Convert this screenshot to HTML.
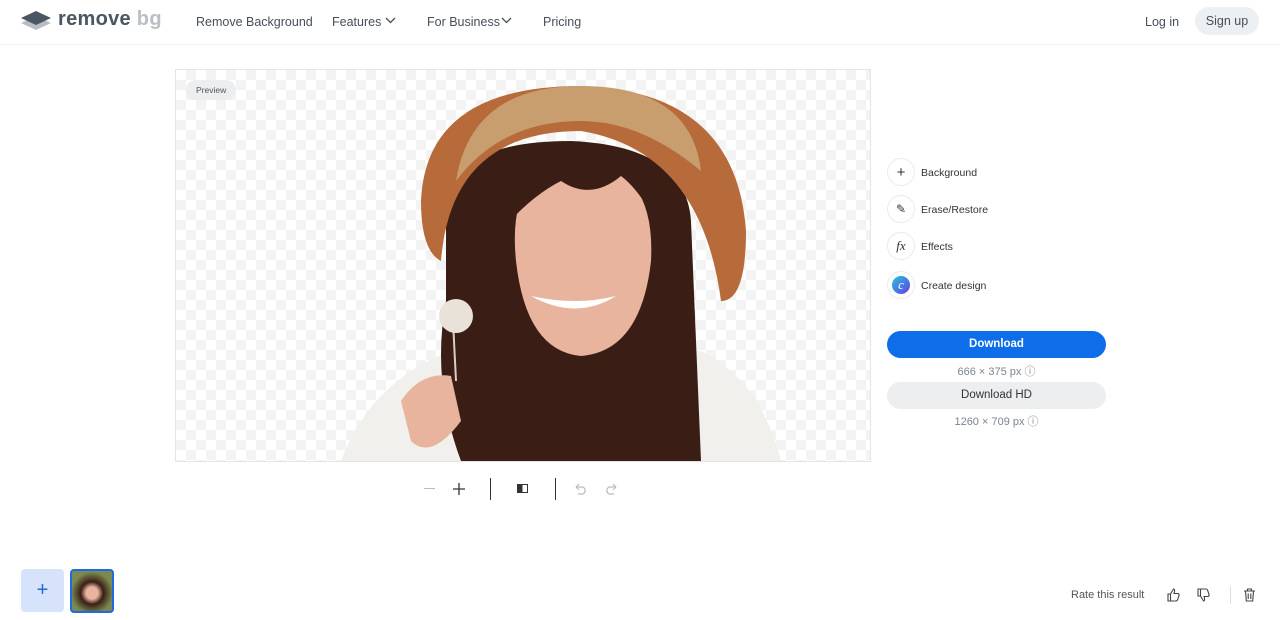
<!DOCTYPE html><html><head><style>
body{margin:0;width:1280px;height:620px;background:#fff;font-family:"Liberation Sans",sans-serif;position:relative;overflow:hidden;color:#454f5b}
.a{position:absolute}
.nav{font-size:12.5px;color:#454f5b}
.chk{background-color:#fff;background-image:linear-gradient(45deg,#f3f3f3 25%,transparent 25%,transparent 75%,#f3f3f3 75%),linear-gradient(45deg,#f3f3f3 25%,transparent 25%,transparent 75%,#f3f3f3 75%);background-size:20px 20px;background-position:0 0,10px 10px}
.tool{left:887px;width:28px;height:28px;border-radius:50%;border:1.5px solid #e8ebee;box-sizing:border-box;display:flex;align-items:center;justify-content:center;font-size:15px;color:#333}
.tl{left:921px;font-size:10.5px;color:#333}
</style></head><body>
<div class="a" style="left:0;top:44px;width:1280px;height:1px;background:#f0f0f0"></div>
<svg class="a" style="left:20px;top:10px" width="32" height="22" viewBox="0 0 32 22"><path d="M1 13 L16 20 L31 13 L16 6Z" fill="#b8bec5"/><path d="M1 8 L16 15 L31 8 L16 1Z" fill="#4a5662"/></svg>
<div class="a" style="left:58px;top:8px;font-size:20px;font-weight:bold;color:#4a5662;letter-spacing:0.3px">remove<span style="color:#b9bfc6"> bg</span></div>
<div class="a nav" style="left:196px;top:15px">Remove Background</div>
<div class="a nav" style="left:332px;top:15px">Features</div>
<svg class="a" style="left:385px;top:17px" width="11" height="7"><path d="M1 1 L5.5 5.5 L10 1" stroke="#454f5b" stroke-width="1.3" fill="none"/></svg>
<div class="a nav" style="left:427px;top:15px">For Business</div>
<svg class="a" style="left:501px;top:17px" width="11" height="7"><path d="M1 1 L5.5 5.5 L10 1" stroke="#454f5b" stroke-width="1.3" fill="none"/></svg>
<div class="a nav" style="left:543px;top:15px">Pricing</div>
<div class="a nav" style="left:1145px;top:15px">Log in</div>
<div class="a nav" style="left:1195px;top:7px;width:64px;height:28px;border-radius:14px;background:#edf0f2;text-align:center;line-height:28px">Sign up</div>
<div class="a chk" style="left:175px;top:69px;width:694px;height:391px;border:1px solid #e4e4e4;overflow:hidden">
<svg width="694" height="391" viewBox="175 69 694 391" style="position:absolute;left:0;top:0">
<path d="M340 460 Q370 380 450 350 L700 350 Q760 380 780 460Z" fill="#f2f0ec"/>
<path d="M445 200 Q455 140 570 140 Q685 145 690 220 L700 460 L460 460 Q430 380 445 300Z" fill="#3a1e16"/>
<path d="M515 260 Q505 160 580 160 Q655 165 650 260 Q640 350 580 355 Q525 350 515 260Z" fill="#e8b49d"/>
<path d="M500 230 Q510 150 580 150 Q650 150 660 230 Q640 190 620 175 Q590 200 560 180 Q530 195 500 230Z" fill="#3a1e16"/>
<path d="M420 200 Q425 85 580 85 Q735 90 745 230 Q745 300 720 300 Q700 150 580 130 Q450 130 440 260 Q420 250 420 200Z" fill="#b76a3a"/>
<path d="M455 180 Q470 85 580 85 Q690 85 700 170 Q640 120 580 120 Q500 120 455 180Z" fill="#c89e6e"/>
<path d="M530 295 Q575 320 615 295 Q575 305 530 295Z" fill="#fff"/>
<line x1="452" y1="320" x2="455" y2="380" stroke="#d8cfc2" stroke-width="2"/>
<circle cx="455" cy="315" r="17" fill="#e8e2d8"/>
<path d="M400 400 Q420 370 450 375 L460 420 Q430 460 410 440Z" fill="#e8b49d"/>
</svg>
<div class="a" style="left:10px;top:10px;padding:0 10px;height:20px;line-height:20px;border-radius:10px;background:#eceeef;font-size:8.5px;color:#555">Preview</div>
</div>
<div class="a" style="left:424px;top:488px;width:11px;height:1px;background:#bbb"></div>
<svg class="a" style="left:453px;top:483px" width="12" height="12"><path d="M6 0V12M0 6H12" stroke="#333" stroke-width="1.3"/></svg>
<div class="a" style="left:490px;top:478px;width:1px;height:22px;background:#333"></div>
<div class="a" style="left:517px;top:484px;width:11px;height:9px;border:1.5px solid #333;box-sizing:border-box;background:linear-gradient(90deg,#333 50%,#fff 50%)"></div>
<div class="a" style="left:555px;top:478px;width:1px;height:22px;background:#333"></div>
<svg class="a" style="left:574px;top:483px" width="44" height="12"><path d="M2 4 H9 A4 4 0 0 1 9 11 H4 M2 4 L5 1 M2 4 L5 7" stroke="#bbb" stroke-width="1.2" fill="none"/><path d="M42 4 H35 A4 4 0 0 0 35 11 H40 M42 4 L39 1 M42 4 L39 7" stroke="#bbb" stroke-width="1.2" fill="none"/></svg>
<div class="a tool" style="top:158px">+</div><div class="a tl" style="top:167px">Background</div>
<div class="a tool" style="top:195px;font-size:12px">✎</div><div class="a tl" style="top:204px">Erase/Restore</div>
<div class="a tool" style="top:232px;font-family:'Liberation Serif';font-style:italic;font-size:13px">fx</div><div class="a tl" style="top:241px">Effects</div>
<div class="a tool" style="top:271px"><div style="width:18px;height:18px;border-radius:50%;background:linear-gradient(135deg,#22c5d8,#6a3ce8);color:#fff;font-family:'Liberation Serif';font-style:italic;font-size:13px;text-align:center;line-height:18px">c</div></div><div class="a tl" style="top:280px">Create design</div>
<div class="a" style="left:887px;top:331px;width:219px;height:27px;border-radius:14px;background:#0e6de8;color:#fff;font-size:11.5px;font-weight:bold;text-align:center;line-height:27px">Download</div>
<div class="a" style="left:887px;top:363px;width:219px;text-align:center;font-size:11px;color:#7a8590">666 × 375 px ⓘ</div>
<div class="a" style="left:887px;top:382px;width:219px;height:27px;border-radius:14px;background:#eceef0;color:#333;font-size:11.5px;text-align:center;line-height:27px">Download HD</div>
<div class="a" style="left:887px;top:413px;width:219px;text-align:center;font-size:11px;color:#7a8590">1260 × 709 px ⓘ</div>
<div class="a" style="left:21px;top:569px;width:43px;height:43px;border-radius:4px;background:#d6e3fb;color:#1f6ae0;font-size:20px;text-align:center;line-height:42px">+</div>
<div class="a" style="left:70px;top:569px;width:40px;height:40px;border:2px solid #1f6ae0;border-radius:4px;background:radial-gradient(circle at 50% 55%,#e8b49d 20%,#3a1e16 38%,#7a8a50 70%)"></div>
<div class="a" style="left:1071px;top:589px;font-size:11px;color:#555">Rate this result</div>
<svg class="a" style="left:1167px;top:588px" width="44" height="14"><path d="M1 6 H3.5 V13 H1Z M3.5 6 L6.5 1 Q8 1 7.5 4 L7 5.5 H11 Q12.5 6 12 7.5 L10.5 12 Q10 13 9 13 H3.5" stroke="#444" stroke-width="1.1" fill="none"/><g transform="translate(30,0) scale(1,-1) translate(0,-14)"><path d="M1 6 H3.5 V13 H1Z M3.5 6 L6.5 1 Q8 1 7.5 4 L7 5.5 H11 Q12.5 6 12 7.5 L10.5 12 Q10 13 9 13 H3.5" stroke="#444" stroke-width="1.1" fill="none"/></g></svg>
<div class="a" style="left:1230px;top:586px;width:1px;height:18px;background:#ddd"></div>
<svg class="a" style="left:1243px;top:588px" width="13" height="14"><path d="M1 3H12 M4.5 3V1H8.5V3 M2.5 3 L3.3 13H9.7L10.5 3 M5.2 5.5V11 M7.8 5.5V11" stroke="#444" stroke-width="1.1" fill="none"/></svg>
</body></html>
